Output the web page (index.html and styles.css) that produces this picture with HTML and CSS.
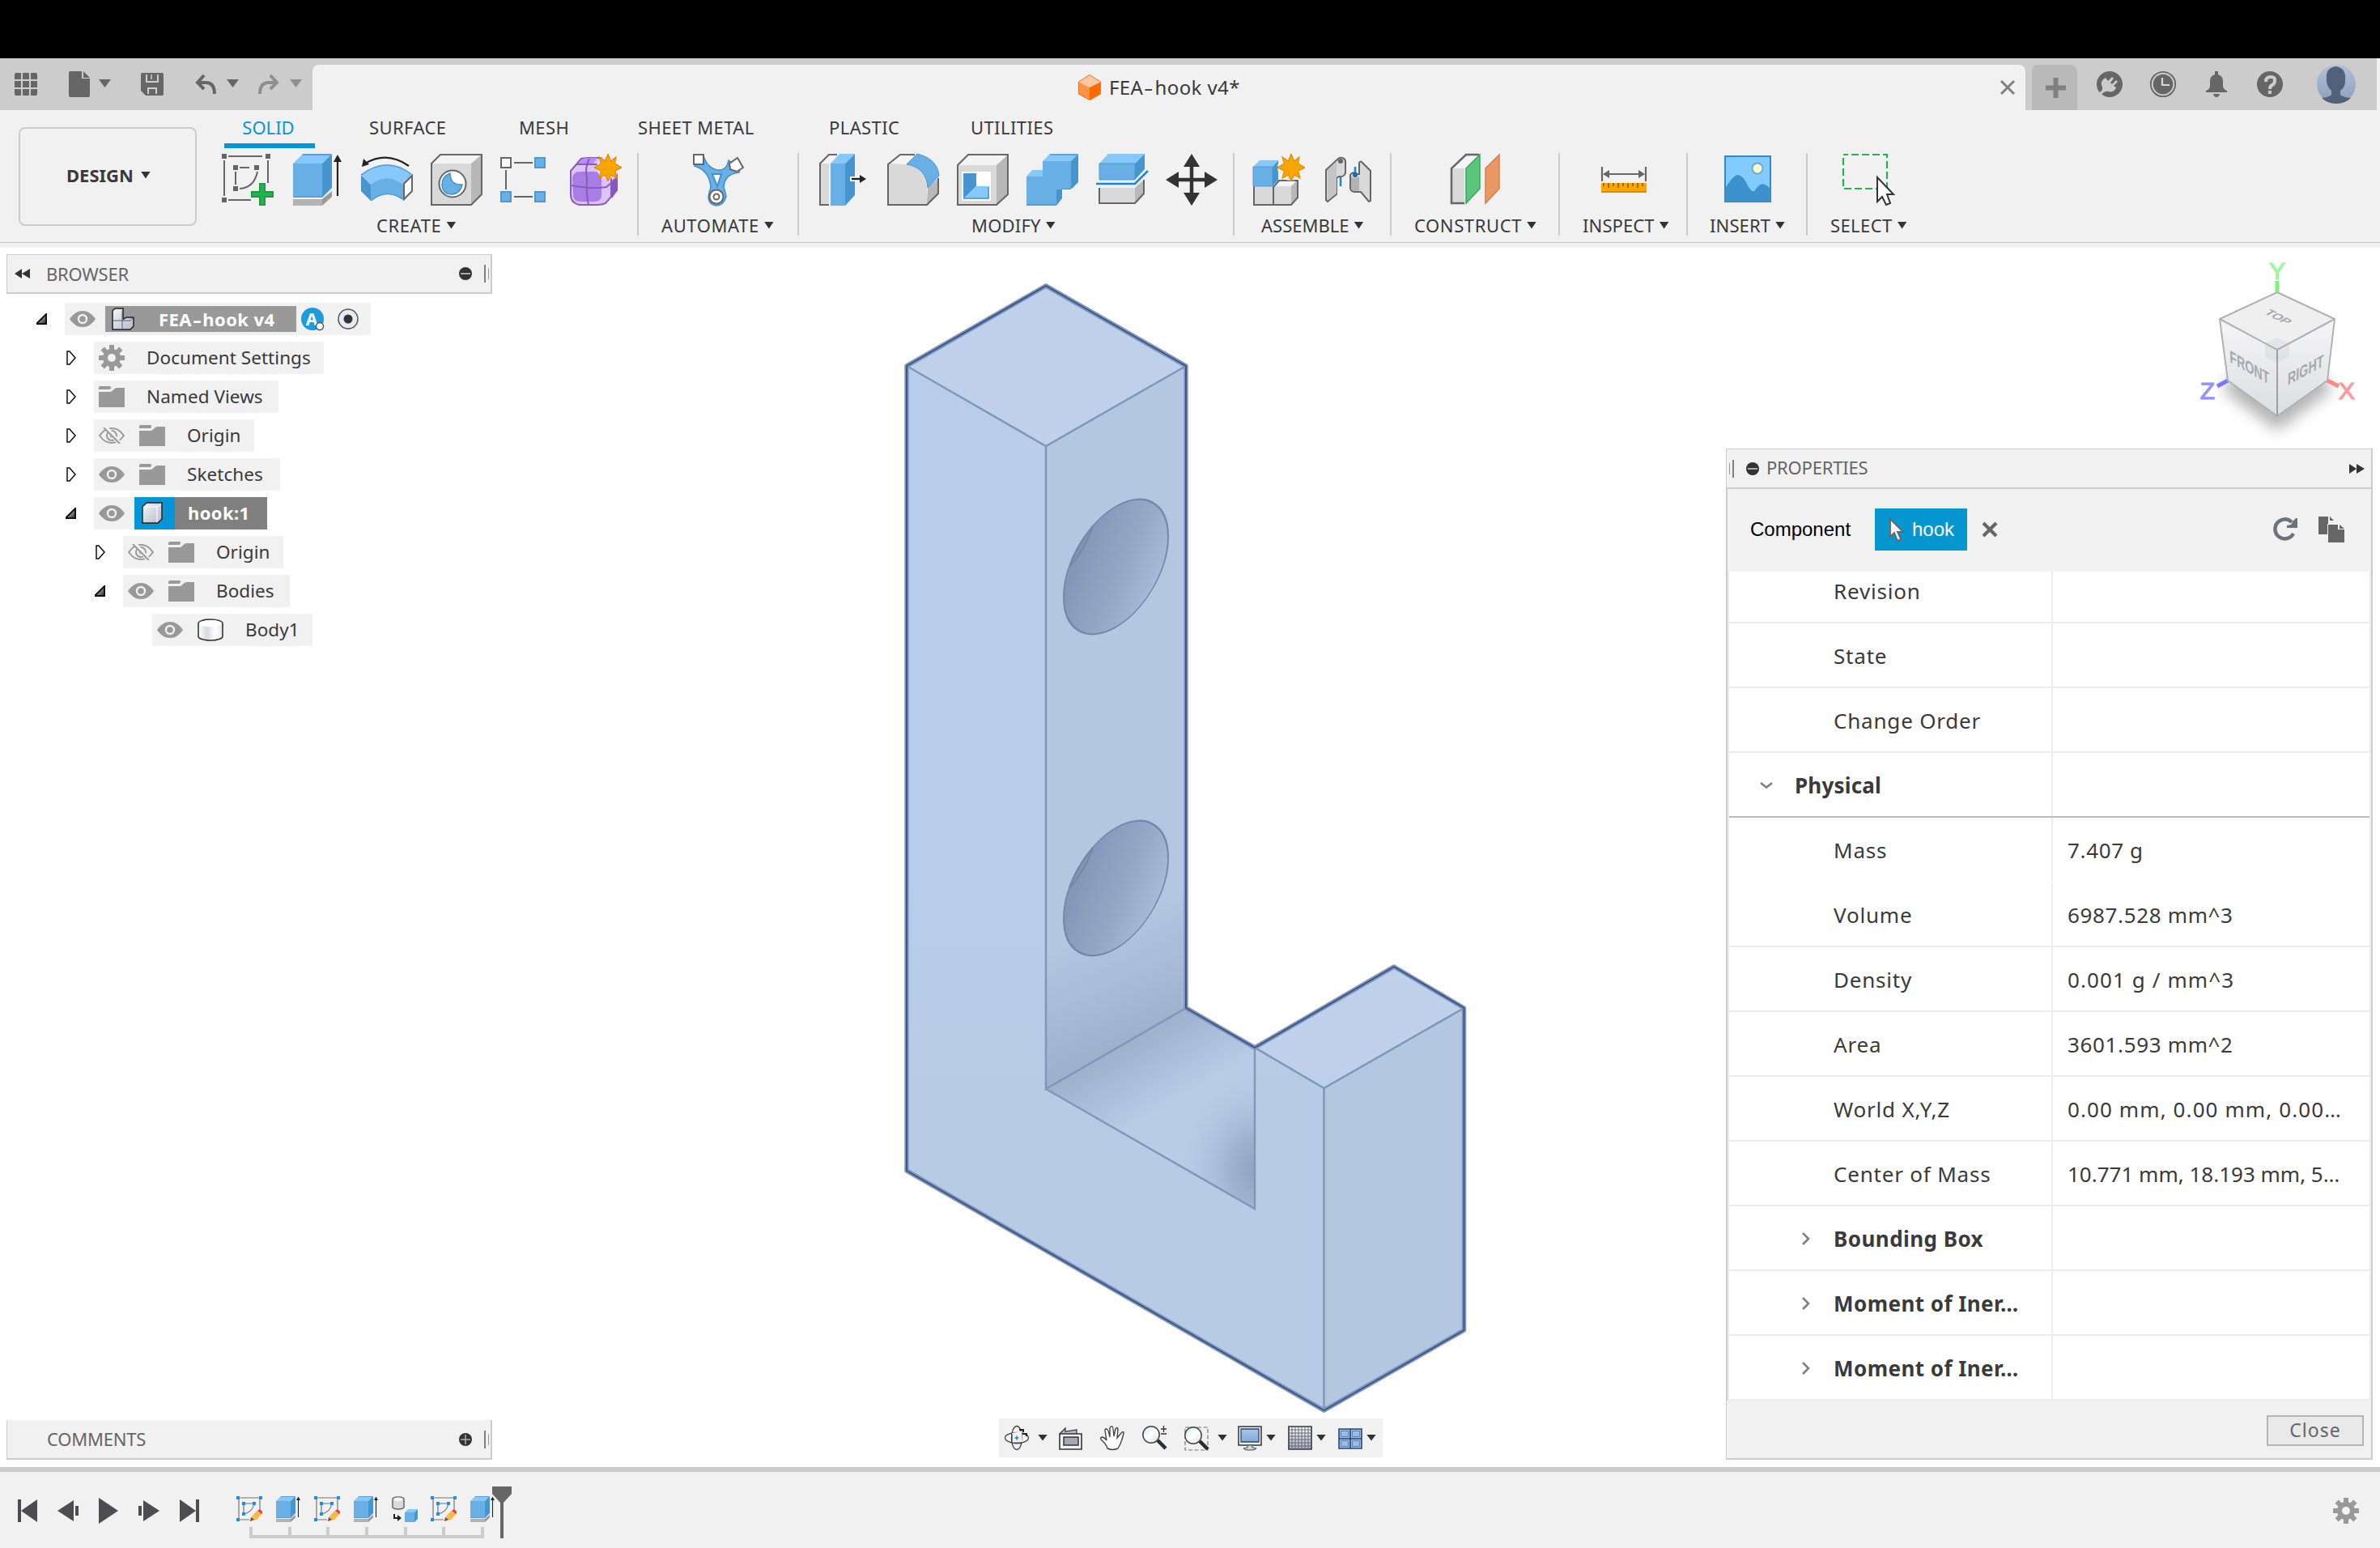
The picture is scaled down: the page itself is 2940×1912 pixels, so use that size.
FILE: index.html
```html
<!DOCTYPE html>
<html lang="en">
<head>
<meta charset="utf-8">
<title>FEA-hook v4*</title>
<link rel="stylesheet" href="styles.css">
</head>
<body>
<svg class="defs" width="0" height="0">
  <defs>
    <linearGradient id="metal" x1="0" y1="0" x2="1" y2="1"><stop offset="0" stop-color="#f4f6fa"/><stop offset="1" stop-color="#b4bac8"/></linearGradient>
    <linearGradient id="lens" x1="0" y1="0" x2="1" y2="1"><stop offset="0" stop-color="#cfe3e3"/><stop offset=".5" stop-color="#fff"/><stop offset="1" stop-color="#cfe0e0"/></linearGradient>
    <linearGradient id="screen" x1="0" y1="0" x2="0" y2="1"><stop offset="0" stop-color="#a9c6e8"/><stop offset="1" stop-color="#84a8d4"/></linearGradient>
    <linearGradient id="gridfill" x1="0" y1="0" x2="0" y2="1"><stop offset="0" stop-color="#fff"/><stop offset="1" stop-color="#a5abba"/></linearGradient>
    <linearGradient id="cyl" x1="0" y1="0" x2="1" y2="0"><stop offset="0" stop-color="#fff"/><stop offset=".35" stop-color="#d6d9e0"/><stop offset=".7" stop-color="#fff"/><stop offset="1" stop-color="#e4e6ea"/></linearGradient>
    <linearGradient id="avatarbg" x1="0" y1="0" x2="0" y2="1"><stop offset="0" stop-color="#b0c0d6"/><stop offset="1" stop-color="#8b9fbd"/></linearGradient>
    <linearGradient id="tri" x1="0" y1="0" x2="1" y2="1"><stop offset="0" stop-color="#fff"/><stop offset="1" stop-color="#222"/></linearGradient>
    <symbol id="eye" viewBox="0 0 32 20"><path d="M0 10C5 3 10 0 16 0s11 3 16 10c-5 7-10 10-16 10S5 17 0 10Z" fill="#999"/><circle cx="16" cy="10" r="5" fill="none" stroke="#f1f1f1" stroke-width="2.4"/></symbol>
    <symbol id="eye-off" viewBox="0 0 32 20"><path d="M1 10C6 3 10 1 16 1s10 2 15 9c-5 7-9 9-15 9S6 17 1 10Z" fill="none" stroke="#999" stroke-width="2"/><circle cx="16" cy="10" r="6" fill="none" stroke="#999" stroke-width="2"/><circle cx="16" cy="10" r="2.5" fill="#999"/><path d="M8-1 26 20" stroke="#f1f1f1" stroke-width="5"/><path d="M6 0 26 20" stroke="#999" stroke-width="2"/></symbol>
    <symbol id="folder" viewBox="0 0 32 26"><path d="M0 2Q0 0 2 0H14Q15 0 15 2T13 4H0ZM0 7H14Q16 7 18 4.500T22 2H32V26H0Z" fill="#999"/></symbol>
    <symbol id="closed" viewBox="0 0 12 18"><path d="M1 1H4L11 9 4 17H1Z" fill="#fff" stroke="#111" stroke-width="1.500"/></symbol>
    <symbol id="open" viewBox="0 0 14 14"><path d="M12 1V13H1V12Z" fill="url(#tri)" stroke="#111" stroke-width="2"/></symbol>
    <symbol id="gear" viewBox="0 0 32 32"><g fill="#999"><path fill-rule="evenodd" d="M16 5a11 11 0 1 0 0 22a11 11 0 1 0 0-22ZM16 11a5 5 0 1 1 0 10a5 5 0 1 1 0-10Z"/><g id="t"><rect x="13" y="0" width="6" height="7"/><rect x="13" y="25" width="6" height="7"/><rect x="0" y="13" width="7" height="6"/><rect x="25" y="13" width="7" height="6"/></g><use href="#t" transform="rotate(45 16 16)"/></g></symbol>
    <symbol id="extrude" viewBox="0 0 64 64"><path d="M2 56H38V64H2Z" fill="#b3b3b3"/><path d="M38 56 50 46V53L38 64Z" fill="#999"/><path d="M2 12 14 0H50L38 12Z" fill="#87c8fa"/><path d="M2 12H38V54H2Z" fill="#68afe5"/><path d="M38 12 50 0V42L38 54Z" fill="#4795cf"/><path d="M14 1H49M3 53H38" stroke="#5aa0d8" stroke-width="2"/><path d="M57 8V52" stroke="#222" stroke-width="2.200"/><path d="M52 10 57 1 62 10Z" fill="#222"/></symbol>
    <symbol id="tsketch" viewBox="0 0 32 32"><path d="M3 2H29M3 2V29M29 2V18M3 29H16M9 9H22M9 9V22Q20 20 22 9" fill="none" stroke="#777" stroke-width="1.200"/><g fill="#1b8fe8"><path d="M0 0h4v4H0zM28 0h4v4h-4zM0 27h4v4H0zM7 7h4v4H7zM20 7h4v4h-4zM7 20h4v4H7z"/></g><path d="M17 31 19 25 25 18 31 22 25 29Z" fill="#fbb942"/><path d="M17 31 18 26 22 29Z" fill="#555"/><path d="M26 18Q29 15 31 18T31 22Z" fill="#ee2e3a"/></symbol>
    <symbol id="star" viewBox="0 0 34 34"><path d="M17 0 20.500 9 27 4 25.500 12 34 17 25.500 21 28 30 20.500 26 17 34 13.500 26 6 30 8.500 21 0 17 8.500 12 6 4 13.500 9Z" fill="#f9a602" stroke="#e08c00" stroke-width="1.200"/></symbol>
  </defs>
</svg>

<div class="notch"></div>

<header class="titlebar">
  <div class="quick">
    <svg class="q-grid" width="28" height="28" viewBox="0 0 28 28" fill="#666"><path d="M2 0H8V8H0V2Q0 0 2 0ZM10 0h8v8h-8zM20 0H26Q28 0 28 2V8H20ZM0 10h8v8H0zM10 10h8v8h-8zM20 10h8v8h-8zM0 20H8V28H2Q0 28 0 26ZM10 20h8v8h-8zM20 20H28V26Q28 28 26 28H20Z"/></svg>
    <svg class="q-file" width="26" height="32" viewBox="0 0 26 32" fill="#666"><path d="M2 0H16V9H26V30Q26 32 24 32H2Q0 32 0 30V2Q0 0 2 0ZM18 0 26 8H18Z"/></svg>
    <i class="caret big"></i>
    <svg class="q-save" width="28" height="28" viewBox="0 0 28 28"><path d="M2 0H26Q28 0 28 2V26Q28 28 26 28H6L0 22V2Q0 0 2 0Z" fill="#666"/><path d="M7 2V11H21V2M9 26V19H19V26" fill="none" stroke="#ccc" stroke-width="2"/><path d="M13 2V8" stroke="#ccc" stroke-width="1.500"/></svg>
    <svg class="q-undo" width="26" height="25" viewBox="0 0 26 25" fill="none" stroke="#666" stroke-width="4"><path d="M11 1 3 10 11 18M4 10H13Q24 10 24 24"/></svg>
    <i class="caret big"></i>
    <svg class="q-redo" width="26" height="25" viewBox="0 0 26 25" fill="none" stroke="#8f8f8f" stroke-width="4"><path d="M15 1 23 10 15 18M22 10H13Q2 10 2 24"/></svg>
    <i class="caret big dim"></i>
  </div>
  <div class="doc-tab">
    <svg width="28" height="32" viewBox="0 0 28 32"><path d="M14 0 28 9 14 16 0 9Z" fill="#ffc9a3"/><path d="M0 9 14 16V32L0 24Z" fill="#ff9248"/><path d="M28 9 14 16V32L28 24Z" fill="#ff6a00"/><path d="M14 .5 27.500 9V24L14 31.500.5 24V9Z" fill="none" stroke="#e87628" stroke-width="1"/></svg>
    <span class="doc-name">FEA<b class="dash">-</b>hook v4*</span>
    <svg class="tab-x" width="18" height="18" viewBox="0 0 18 18"><path d="M1 1 17 17M17 1 1 17" stroke="#808080" stroke-width="3"/></svg>
  </div>
  <div class="new-tab"><svg width="25" height="25" viewBox="0 0 25 25"><path d="M0 12.500H25M12.500 0V25" stroke="#808080" stroke-width="6"/></svg></div>
  <div class="account">
    <svg width="32" height="32" viewBox="0 0 32 32"><circle cx="16" cy="16" r="16" fill="#666"/><path d="M3 26Q8 24 7 20Q3 12 11 8L14 12 19 7 21 9 17 14 19 16 24 11 26 13 21 18 24 20Q22 27 14 25Q10 24 6 29Z" fill="#ccc"/></svg>
    <svg width="32" height="32" viewBox="0 0 32 32"><circle cx="16" cy="16" r="15.200" fill="none" stroke="#666" stroke-width="1.800"/><circle cx="16" cy="16" r="12.300" fill="#666"/><path d="M15 8V17H24" fill="none" stroke="#d6d6d6" stroke-width="2.200"/></svg>
    <svg width="32" height="32" viewBox="0 0 32 32" fill="#666"><path d="M14 0H18V4Q24 6 24 12V18Q24 22 29 24V26H3V24Q8 22 8 18V12Q8 6 14 4ZM12 28H20Q19 32 16 32T12 28Z"/></svg>
    <svg width="32" height="32" viewBox="0 0 32 32"><circle cx="16" cy="16" r="16" fill="#666"/><path d="M11 13Q11 7 17 7T22 12Q22 15 19 17Q16 18 16 22" fill="none" stroke="#ccc" stroke-width="4"/><path d="M14 24h4v4h-4z" fill="#ccc"/></svg>
    <svg class="avatar" width="48" height="48" viewBox="0 0 48 48"><circle cx="24" cy="24" r="24" fill="url(#avatarbg)"/><path d="M24 2C15 3 12 8 12 14V21Q13 28 18 32V37Q15 40 6 41Q13 48 24 48T42 41Q32 40 29 37V32Q35 28 35 20V13Q34 4 24 2Z" fill="#52617a"/></svg>
  </div>
</header>

<section class="ribbon">
  <div class="design">DESIGN<i class="caret"></i></div>
  <div class="ribbon-main">
    <nav class="tabs"><span class="active">SOLID</span><span>SURFACE</span><span>MESH</span><span>SHEET METAL</span><span>PLASTIC</span><span>UTILITIES</span></nav>
    <div class="groups">
      <div class="group g-create">
        <div class="icons">
          <svg viewBox="0 0 64 64"><path d="M8 3H50M3 8V52M57 8V36M8 57H36M22 17H34M17 22V38M44 22Q40 42 22 43" fill="none" stroke="#666" stroke-width="2"/><path d="M0 0h6v6H0zM54 0h6v6h-6zM0 54h6v6H0zM14 14h6v6h-6zM40 14h6v6h-6zM14 40h6v6h-6z" fill="#666"/><path d="M47 37h6v10h10v6H53v10h-6V53H37v-6h10z" fill="#26b150" stroke="#1d9c43" stroke-width="2"/></svg>
          <svg><use href="#extrude"/></svg>
          <svg viewBox="0 0 64 64"><path d="M0 26 12 38V58L0 46Z" fill="#4795cf"/><path d="M0 26Q32 2 64 26L52 38Q32 22 12 38Z" fill="#87c8fa"/><path d="M12 38Q32 22 52 38V57Q32 42 12 58Z" fill="#68afe5"/><path d="M0 26Q32 2 62 25M12 58Q32 42 51 56" fill="none" stroke="#4f9bd3" stroke-width="1.500"/><path d="M53 37 63 27V46L53 56Z" fill="#fff" stroke="#666" stroke-width="2"/><path d="M5 12Q32-4 59 15" fill="none" stroke="#222" stroke-width="2.200"/><path d="M1 16 3 6 10 13Z" fill="#222"/></svg>
          <svg viewBox="0 0 64 64"><path d="M1 12H50V63H1Z" fill="#d9d9d9"/><path d="M1 12 12 1H63L50 12Z" fill="#f4f4f4"/><path d="M50 12 63 1V50L50 63Z" fill="#b8b8b8"/><path d="M1 12 12 1H63V50L50 63H1Z" fill="none" stroke="#666" stroke-width="2"/><circle cx="27" cy="37" r="16.500" fill="#fff" stroke="#666" stroke-width="2"/><path d="M24 24Q14 28 14 38Q15 50 26 50Q37 49 39 38Q24 39 24 24Z" fill="#68afe5" stroke="#4191cc" stroke-width="1.500"/></svg>
          <svg viewBox="0 0 64 64"><path d="M1 5h12v12H1z" fill="#fff" stroke="#666" stroke-width="2"/><path d="M43 5h12v12H43zM1 47h12v12H1zM43 47h12v12H43z" fill="#68afe5" stroke="#5198ce" stroke-width="2"/><path d="M17 11H40M7 20V44M17 53H40" stroke="#666" stroke-width="2"/></svg>
          <svg viewBox="0 0 64 64"><path d="M1 21 14 6Q18 5 22 5H38Q50 8 58 24V45L44 61Q40 63 34 63H12Q1 61 1 50Z" fill="#dcc3fa" stroke="#8a5cb8" stroke-width="2"/><path d="M10 12 18 5H34L28 13H12Z" fill="#b98bfa"/><path d="M3 30Q4 22 12 22H30Q39 22 39 30V52Q39 59 30 59H13Q4 59 4 50Z" fill="#a87ee6"/><path d="M52 33 59 28V44L52 55Z" fill="#8756bd"/><path d="M1 39Q28 44 45 41L58 30M24 6Q18 18 21 30Q20 50 23 63M8 13H34M51 18V54" fill="none" stroke="#8a5cb8" stroke-width="2"/><circle cx="47" cy="17" r="14" fill="#f1e6fb" opacity=".8"/><use href="#star" x="30" y="0" width="34" height="34"/></svg>
        </div>
        <div class="label">CREATE<i class="caret"></i></div>
      </div>
      <div class="group g-automate">
        <div class="icons">
          <svg viewBox="0 0 64 64"><path d="M13 2Q17 17 30 20Q42 21 44 8L58 20 57 23Q39 25 38 41Q40 46 41 53Q38 64 28 64Q19 62 19 53Q20 46 22 42Q21 21 2 15Z" fill="#68afe5" stroke="#4191cc" stroke-width="1.500"/><path d="M1 1h12v12H1z" fill="#fff" stroke="#666" stroke-width="2"/><path d="M55 5 62 17 54 22 46 19 45 12Z" fill="#fff" stroke="#666" stroke-width="2"/><path d="M24 25H35L30 40Z" fill="#fff" stroke="#4191cc" stroke-width="2"/><circle cx="29" cy="53" r="8.500" fill="#fff" stroke="#666" stroke-width="2"/><circle cx="29" cy="53" r="3.500" fill="#fff" stroke="#666" stroke-width="2"/></svg>
        </div>
        <div class="label">AUTOMATE<i class="caret"></i></div>
      </div>
      <div class="group g-modify">
        <div class="icons">
          <svg viewBox="0 0 64 64"><path d="M3 12H14V63H3Z" fill="#d9d9d9"/><path d="M3 12 14 1H24L14 12Z" fill="#f4f4f4"/><path d="M14 63H3V12L14 1H24" fill="none" stroke="#666" stroke-width="2"/><path d="M16 12 27 0H46L34 12Z" fill="#87c8fa"/><path d="M16 12H34V64H16Z" fill="#68afe5"/><path d="M34 12 46 0V51L34 64Z" fill="#4795cf"/><path d="M40 31H54" stroke="#fff" stroke-width="6"/><path d="M42 31H53" stroke="#222" stroke-width="2.500"/><path d="M52 26 60 31 52 36Z" fill="#222"/></svg>
          <svg viewBox="0 0 64 64"><path d="M1 12H22Q46 16 49 42V63H1Z" fill="#d9d9d9"/><path d="M1 12 16 1H36L24 13Z" fill="#f4f4f4"/><path d="M50 42 63 30V49L49 63Z" fill="#b8b8b8"/><path d="M24 13 37 0Q62 6 64 27L50 42Q48 17 24 13Z" fill="#68afe5" stroke="#4b99d2"/><path d="M34 1H16L1 13V63H49L63 49V30" fill="none" stroke="#666" stroke-width="2"/></svg>
          <svg viewBox="0 0 64 64"><path d="M1 14H49V63H1Z" fill="#d9d9d9"/><path d="M1 14 14 1H63L49 14Z" fill="#f4f4f4"/><path d="M49 14 63 1V50L49 63Z" fill="#b8b8b8"/><path d="M1 14 14 1H63V50L49 63H1Z" fill="none" stroke="#666" stroke-width="2"/><path d="M6 22H42V58H6Z" fill="#fff"/><path d="M8 24H24V40L8 56Z" fill="#4795cf"/><path d="M24 40H40V56H8Z" fill="#87c8fa"/><path d="M9 24V55H39V41" fill="none" stroke="#4b99d2" stroke-width="1.500"/></svg>
          <svg viewBox="0 0 64 64"><path d="M0 28 7 20H22V28Z" fill="#87c8fa"/><path d="M20 9 29 0H64L55 9Z" fill="#87c8fa"/><path d="M0 28H20V9H55V44H37V64H0Z" fill="#68afe5"/><path d="M55 9 64 0V35L56 43H44V55L37 64V44H55Z" fill="#4795cf"/><path d="M0 63H37M29 1H63" stroke="#4f9bd3" stroke-width="1.500"/></svg>
          <svg viewBox="0 0 64 64"><path d="M4 42H48V61H4Z" fill="#d9d9d9"/><path d="M48 42 59 32V49L48 61Z" fill="#b8b8b8"/><path d="M4 42V61H48L59 49V32" fill="none" stroke="#666" stroke-width="2"/><path d="M4 12 15 0H60L48 12Z" fill="#87c8fa"/><path d="M4 12H48V32H4Z" fill="#68afe5" stroke="#4f9bd3"/><path d="M48 12 60 0V19L48 32Z" fill="#4795cf"/><path d="M0 37H48L64 21" fill="none" stroke="#1787e0" stroke-width="2.500"/></svg>
          <svg viewBox="0 0 64 64"><path d="M32 8V56M8 32H56" stroke="#333" stroke-width="4.500"/><path d="M32 0 42 16H22ZM32 64 42 48H22ZM0 32 16 22V42ZM64 32 48 22V42Z" fill="#333"/></svg>
        </div>
        <div class="label">MODIFY<i class="caret"></i></div>
      </div>
      <div class="group g-assemble">
        <div class="icons">
          <svg viewBox="0 0 64 64"><path d="M1 40H25V63H1ZM25 40H47V63H25Z" fill="#d9d9d9"/><path d="M25 40 33 32H55L47 40Z" fill="#f4f4f4"/><path d="M47 40 55 32V54L47 63Z" fill="#b8b8b8"/><path d="M1 40V63H47L55 54V33L32 33 25 41V63" fill="none" stroke="#666" stroke-width="2"/><path d="M0 16 8 8H31L24 16Z" fill="#87c8fa"/><path d="M0 16H24V40H0Z" fill="#68afe5" stroke="#4f9bd3"/><path d="M24 16 31 8V32L24 40Z" fill="#4795cf"/><circle cx="46" cy="17" r="16" fill="#f1f1f1" opacity=".8"/><use href="#star" x="30" y="0" width="34" height="34"/></svg>
          <svg viewBox="0 0 64 64"><path d="M18 7Q20 4 24 5Q28 6 28 10V24Q26 29 20 28L17 30V50L6 59 4 57V20Z" fill="#d9d9d9" stroke="#666" stroke-width="2"/><path d="M6 20 17 9V49L6 57Z" fill="#c4c4c4"/><circle cx="22" cy="9" r="3" fill="#666"/><path d="M45 11Q47 8 49 11L59 21V58L57 59 47 47H39Q34 46 34 42V26Q37 21 43 25H45Z" fill="#d9d9d9" stroke="#666" stroke-width="2"/><path d="M35 28Q40 32 45 28V45Q40 48 35 44Z" fill="#b3b3b3"/><path d="M22 29V40M40 16V27" stroke="#1787e0" stroke-width="2.500"/><circle cx="40" cy="26" r="3" fill="#1769b0"/></svg>
        </div>
        <div class="label">ASSEMBLE<i class="caret"></i></div>
      </div>
      <div class="group g-construct">
        <div class="icons">
          <svg viewBox="0 0 64 64"><path d="M2 18H18V61H2Z" fill="#d9d9d9"/><path d="M2 18 20 1H36L20 18Z" fill="#f4f4f4"/><path d="M36 1H20L2 18V61H18" fill="none" stroke="#666" stroke-width="2.500"/><path d="M20 18 37 1V43L20 61Z" fill="#5bc57c" stroke="#3aa55d" stroke-width="1.500"/><path d="M44 18 61 1V43L44 61Z" fill="#e89963" stroke="#cf824e" stroke-width="1.500"/></svg>
        </div>
        <div class="label">CONSTRUCT<i class="caret"></i></div>
      </div>
      <div class="group g-inspect">
        <div class="icons">
          <svg viewBox="0 0 64 64"><path d="M5 16V34M59 16V34M10 25H54" stroke="#666" stroke-width="2.200"/><path d="M6 25 14 20V30ZM58 25 50 20V30Z" fill="#666"/><path d="M4 36h56v12H4z" fill="#fba500"/><path d="M4 47h56" stroke="#e08c00" stroke-width="2"/><path d="M7 36v4M13 36v6M19 36v4M25 36v6M31 36v4M37 36v6M43 36v4M49 36v6M55 36v4" stroke="#8a6a20" stroke-width="1.800"/></svg>
        </div>
        <div class="label">INSPECT<i class="caret"></i></div>
      </div>
      <div class="group g-insert">
        <div class="icons">
          <svg viewBox="0 0 64 64"><path d="M4 3h56v56H4z" fill="#82cbff" stroke="#3488c8" stroke-width="2"/><path d="M4 43Q14 26 20 26T33 41Q38 49 41 45Q50 30 60 44V59H4Z" fill="#3e92cc"/><circle cx="44" cy="18" r="6.500" fill="#fdfbc8" stroke="#66aada" stroke-width="2"/></svg>
        </div>
        <div class="label">INSERT<i class="caret"></i></div>
      </div>
      <div class="group g-select">
        <div class="icons">
          <svg viewBox="0 0 64 64"><path d="M1 1H55V43H1Z" fill="none" stroke="#26b150" stroke-width="2.200" stroke-dasharray="9 4" stroke-dashoffset="3"/><path d="M43 29V59L49 53 54 63 59 61 55 50H63Z" fill="#fff" stroke="#333" stroke-width="2"/></svg>
        </div>
        <div class="label">SELECT<i class="caret"></i></div>
      </div>
    </div>
  </div>
</section>

<main class="viewport">
  <svg class="scene" viewBox="0 306 2940 1506" width="2940" height="1506">
    <defs>
      <linearGradient id="front" x1="0" y1="0" x2="0" y2="1"><stop offset=".5" stop-color="#b7cde9"/><stop offset=".7" stop-color="#b7cbe4"/></linearGradient>
      <linearGradient id="wall" gradientUnits="userSpaceOnUse" x1="1345" y1="1150" x2="1405" y2="1285"><stop offset="0" stop-color="#b3c7e1"/><stop offset="1" stop-color="#9db0cd"/></linearGradient>
      <linearGradient id="floor" gradientUnits="userSpaceOnUse" x1="1378" y1="1295" x2="1425" y2="1375"><stop offset="0" stop-color="#9db1ce"/><stop offset="1" stop-color="#b8cce6"/></linearGradient>
      <radialGradient id="pocket" gradientUnits="userSpaceOnUse" cx="1552" cy="1445" r="130" gradientTransform="translate(1552 1445) scale(.78 1) translate(-1552 -1445)"><stop offset="0" stop-color="#8fa2c1"/><stop offset=".3" stop-color="#99acca" stop-opacity=".85"/><stop offset="1" stop-color="#b8cce6" stop-opacity="0"/></radialGradient>
      <linearGradient id="hole" x1="0" y1=".3" x2="1" y2=".9"><stop offset="0" stop-color="#8095b7"/><stop offset=".55" stop-color="#95a8c6"/><stop offset=".85" stop-color="#a5b9d6"/><stop offset="1" stop-color="#b0c4e0"/></linearGradient>
      <linearGradient id="cubeside" x1="0" y1="0" x2="0" y2="1"><stop offset="0" stop-color="#f5f5f6"/><stop offset="1" stop-color="#dcdddf"/></linearGradient>
      <filter id="soft" x="-50%" y="-50%" width="200%" height="200%"><feGaussianBlur stdDeviation="9"/></filter>
    </defs>
    <path d="M1120 452V1446L1635.500 1742V1344L1550 1294V1493L1292 1345V551Z" fill="url(#front)"/>
    <path d="M1292 353 1465 452 1292 551 1120 452Z" fill="#bfd1ea"/>
    <path d="M1292 551 1465 452V1245L1292 1345Z" fill="url(#wall)"/>
    <path d="M1292 1345 1465 1245 1550 1294V1493Z" fill="url(#floor)"/>
    <path d="M1292 1345 1465 1245 1550 1294V1493Z" fill="url(#pocket)"/>
    <path d="M1550 1294 1722 1194 1808.500 1245 1635.500 1344Z" fill="#bfd1ea"/>
    <path d="M1635.500 1344 1808.500 1245V1643L1635.500 1742Z" fill="#b3c7e1"/>
    <g fill="url(#hole)" stroke="#7388ab" stroke-width="2">
      <ellipse rx="64.500" ry="74.500" transform="matrix(1 -.577 0 1 1378.500 700)"/>
      <ellipse rx="64.500" ry="74.500" transform="matrix(1 -.577 0 1 1378.500 1097)"/>
      <path d="M1321 700Q1329 675 1350 650Q1340 680 1321 700ZM1321 1097Q1329 1072 1350 1047Q1340 1077 1321 1097Z" fill="#8094b4"/>
    </g>
    <path d="M1120 452 1292 551 1465 452M1292 551V1345L1465 1245M1292 1345 1550 1493V1294L1635.500 1344 1808.500 1245M1635.500 1344V1740" fill="none" stroke="#8197b8" stroke-width="2.500"/>
    <path d="M1120 452 1292 353 1465 452V1245L1550 1294 1722 1194 1808.500 1245V1643L1635.500 1742 1120 1446Z" fill="none" stroke="#7f96bf" stroke-width="5.500" stroke-linejoin="round"/>
    <path d="M1120 452 1292 353 1465 452V1245L1550 1294 1722 1194 1808.500 1245V1643L1635.500 1742 1120 1446Z" fill="none" stroke="#3f5583" stroke-width="2" stroke-linejoin="round"/>

    <path d="M2752 470 2813 440 2875 470 2880 482 2813 532 2746 482Z" fill="#777" opacity=".55" filter="url(#soft)"/>
    <path d="M2813 347V362" stroke="#7cf57c" stroke-width="5"/>
    <path d="M2752 470 2739 477" stroke="#7a7af5" stroke-width="5"/>
    <path d="M2875 470 2889 477" stroke="#f98a8a" stroke-width="5"/>
    <path d="M2742 394 2813 432V514L2752 470Z" fill="url(#cubeside)"/>
    <path d="M2884 394 2813 432V514L2875 470Z" fill="url(#cubeside)"/>
    <path d="M2813 361 2884 394 2813 432 2742 394Z" fill="#efeff0"/>
    <path d="M2813 417 2828 424V440L2813 449 2798 440V424Z" fill="#d9dce4" opacity=".6"/>
    <path d="M2813 361 2884 394 2813 432 2742 394ZM2813 432V514L2752 470 2742 394M2813 514 2875 470 2884 394" fill="none" stroke="#b0b1b3" stroke-width="2" stroke-linejoin="round"/>
    <path d="M2813 432V514" stroke="#a0a0a2" stroke-width="2"/>
    <g class="cube-text">
      <text class="axis" x="2813" y="345" fill="#9cf59c" stroke="#9cf59c">Y</text>
      <text class="axis" x="2727" y="493" fill="#9494f8" stroke="#9494f8">Z</text>
      <text class="axis" x="2899" y="493" fill="#fa9a9a" stroke="#fa9a9a">X</text>
      <text class="face" transform="matrix(.68 .39 .03 1 2779 461)">FRONT</text>
      <text class="face" transform="matrix(.68 -.37 -.03 1 2848 464)">RIGHT</text>
      <text class="face" transform="matrix(.66 .34 -.6 .35 2810 394)">TOP</text>
    </g>
  </svg>

  <aside class="browser">
    <div class="panel-head">
      <svg class="chev" width="19" height="12" viewBox="0 0 19 12"><path d="M9 0V12L0 6ZM19 0V12L9 6Z" fill="#333"/></svg>
      <span>BROWSER</span>
      <svg class="pill" width="16" height="16" viewBox="0 0 16 16"><circle cx="8" cy="8" r="8" fill="#333"/><path d="M2 8H14" stroke="#aaa" stroke-width="2"/></svg>
      <i class="grip"></i>
    </div>
    <ul class="tree">
      <li class="lv0"><svg class="tg o"><use href="#open"/></svg>
        <div class="node n0"><svg class="eye"><use href="#eye"/></svg>
          <div class="root"><svg width="28" height="28" viewBox="0 0 28 28"><path d="M1 4 4 1H14V13L15 14 18 12H27V23L23 27H1Z" fill="url(#metal)" stroke="#222" stroke-width="1.500"/><path d="M1 16H13M13 4V27M13 14V16H23L27 12" fill="none" stroke="#5a6070" stroke-width="1"/></svg><b>FEA<b class="dash">-</b>hook v4</b></div>
          <svg class="badge" width="28" height="28" viewBox="0 0 28 28"><circle cx="14" cy="14" r="14" fill="#1c9cd9"/><text x="13" y="22">A</text><circle cx="23" cy="23" r="4.500" fill="#fff" stroke="#555" stroke-width="1.500"/></svg>
          <svg class="radio" width="26" height="26" viewBox="0 0 26 26"><circle cx="13" cy="13" r="12" fill="#e8ebf4" stroke="#555" stroke-width="1.500"/><circle cx="13" cy="13" r="5.500" fill="#333"/></svg>
        </div></li>
      <li class="lv1"><svg class="tg c"><use href="#closed"/></svg><div class="node n1"><svg class="gear"><use href="#gear"/></svg><span>Document Settings</span></div></li>
      <li class="lv1"><svg class="tg c"><use href="#closed"/></svg><div class="node n2"><svg class="folder"><use href="#folder"/></svg><span>Named Views</span></div></li>
      <li class="lv1"><svg class="tg c"><use href="#closed"/></svg><div class="node n3"><svg class="eye"><use href="#eye-off"/></svg><svg class="folder"><use href="#folder"/></svg><span>Origin</span></div></li>
      <li class="lv1"><svg class="tg c"><use href="#closed"/></svg><div class="node n4"><svg class="eye"><use href="#eye"/></svg><svg class="folder"><use href="#folder"/></svg><span>Sketches</span></div></li>
      <li class="lv1"><svg class="tg o"><use href="#open"/></svg><div class="node n5"><svg class="eye"><use href="#eye"/></svg><div class="sel-icon"><svg width="26" height="28" viewBox="0 0 26 28"><path d="M1 6 6 1H25V21L20 26H1Z" fill="url(#metal)" stroke="#222" stroke-width="1.500"/><path d="M2 6H19V25M19 6 24 2" fill="none" stroke="#fff" stroke-width="1"/></svg></div><b class="sel-name">hook:1</b></div></li>
      <li class="lv2"><svg class="tg c"><use href="#closed"/></svg><div class="node n3"><svg class="eye"><use href="#eye-off"/></svg><svg class="folder"><use href="#folder"/></svg><span>Origin</span></div></li>
      <li class="lv2"><svg class="tg o"><use href="#open"/></svg><div class="node n7"><svg class="eye"><use href="#eye"/></svg><svg class="folder"><use href="#folder"/></svg><span>Bodies</span></div></li>
      <li class="lv3"><i class="tg c"></i><div class="node n3"><svg class="eye"><use href="#eye"/></svg><svg class="body" viewBox="0 0 32 28"><path d="M1 6A15 5 0 0 1 31 6V22A15 5 0 0 1 1 22Z" fill="url(#cyl)" stroke="#333" stroke-width="1.600"/><ellipse cx="16" cy="6" rx="14" ry="4" fill="#fff"/></svg><span>Body1</span></div></li>
    </ul>
  </aside>

  <aside class="comments panel-head">
    <span>COMMENTS</span>
    <svg class="pill" width="16" height="16" viewBox="0 0 16 16"><circle cx="8" cy="8" r="8" fill="#333"/><path d="M2 8H14M8 2V14" stroke="#aaa" stroke-width="1.600"/></svg>
    <i class="grip"></i>
  </aside>

  <div class="navbar">
    <svg class="n-orbit" viewBox="0 0 30 30"><ellipse cx="15" cy="15" rx="14.500" ry="6.500" fill="none" stroke="#444" stroke-width="1.300"/><ellipse cx="15" cy="15" rx="6.500" ry="14.500" fill="none" stroke="#444" stroke-width="1.300"/><path d="M9 9 21 7 22 20 9 20Z" fill="#f1f1f1"/><path d="M9 10V20M12 21.500H20" stroke="#444" stroke-width="1.300"/><path d="M18 5h5v3M22 10h5v3" fill="none" stroke="#222" stroke-width="2"/><path d="M12.500 15h5M15 12.500v5" stroke="#1787e0" stroke-width="1.500"/></svg>
    <i class="caret"></i>
    <svg class="n-look" viewBox="0 0 30 30"><path d="M1 10 8 3V7L22 5V10" fill="#b4b9c2" stroke="#333" stroke-width="1.200"/><path d="M1 10h27v19H1z" fill="#f6f6f8" stroke="#333" stroke-width="1.600"/><path d="M6 14h18v10H6z" fill="#a4a9b4" stroke="#333" stroke-width="1.500"/></svg>
    <svg class="n-pan" viewBox="0 0 30 30"><path d="M9 28Q8 23 1 17Q0 14 3 14Q6 15 8 18L6 6Q6 3 8 4Q10 4 12 14L12 3Q13 0 15 1Q16 1 17 13L19 4Q21 1 22 4L21 15 26 9Q29 6 29 9Q27 20 22 28Q15 31 9 28Z" fill="#fcfcfc" stroke="#444" stroke-width="1.400"/></svg>
    <svg class="n-zoom" viewBox="0 0 30 30"><path d="M19 18 29 28" stroke="#2a2e36" stroke-width="4.500"/><circle cx="11" cy="11" r="10.200" fill="url(#lens)" stroke="#444" stroke-width="1.500"/><path d="M23 4h7M26.500 0v8M23 10h7" stroke="#333" stroke-width="1.300"/></svg>
    <svg class="n-window" viewBox="0 0 30 30"><path d="M1 2H29V30H1Z" fill="none" stroke="#777" stroke-width="1.200" stroke-dasharray="5 2.500"/><path d="M19 19 29 29" stroke="#2a2a2a" stroke-width="4.500"/><circle cx="11" cy="12" r="10.200" fill="url(#lens)" stroke="#444" stroke-width="1.500"/></svg>
    <i class="caret"></i>
    <svg class="n-mon" viewBox="0 0 30 30"><path d="M1 1h28v23H1z" fill="#f4f4f6" stroke="#333" stroke-width="1.500"/><path d="M4 4h22v16H4z" fill="url(#screen)" stroke="#27457a" stroke-width="1.300"/><path d="M12 24H18V27L23 28Q22 30 18 30H12Q8 30 7 28L12 27Z" fill="#d4d7de" stroke="#444" stroke-width="1"/></svg>
    <i class="caret"></i>
    <svg class="n-gridi" viewBox="0 0 30 30"><path d="M1 1h28v28H1z" fill="url(#gridfill)" stroke="#333" stroke-width="1.600"/><path d="M5 1V29M9 1V29M13 1V29M17 1V29M21 1V29M25 1V29M1 5H29M1 9H29M1 13H29M1 17H29M1 21H29M1 25H29" stroke="#666b78" stroke-width="1"/></svg>
    <i class="caret"></i>
    <svg class="n-views" viewBox="0 0 30 30"><path d="M1 4h28v24H1z" fill="#9dbce4" stroke="#27457a" stroke-width="1.600"/><path d="M15 4V28M1 16H29" stroke="#27457a" stroke-width="1.600"/><path d="M3.500 6.500h9v7h-9zM17.500 6.500h9v7h-9zM3.500 18.500h9v7h-9zM17.500 18.500h9v7h-9z" fill="none" stroke="#6482ab" stroke-width="1"/></svg>
    <i class="caret"></i>
  </div>

  <aside class="properties">
    <div class="prop-head">
      <i class="grip"></i>
      <svg width="16" height="16" viewBox="0 0 16 16"><circle cx="8" cy="8" r="8" fill="#333"/><path d="M2 8H14" stroke="#aaa" stroke-width="2"/></svg>
      <span>PROPERTIES</span>
      <svg class="chev" width="19" height="12" viewBox="0 0 19 12"><path d="M0 0V12L9 6ZM9 0V12L19 6Z" fill="#333"/></svg>
    </div>
    <div class="prop-pick">
      <span class="comp">Component</span>
      <span class="chip"><svg width="18" height="30" viewBox="0 0 18 30"><path d="M1 2V24L6 19 10 29 14 27 10 18H17Z" fill="#f4f4f4" stroke="#666" stroke-width="1.800"/></svg>hook</span>
      <svg class="clear" width="18" height="18" viewBox="0 0 18 18"><path d="M1 1 17 17M17 1 1 17" stroke="#666" stroke-width="4.200"/></svg>
      <svg class="refresh" width="30" height="30" viewBox="0 0 30 30"><path d="M25 20A12 12 0 1 1 23 6" fill="none" stroke="#6b747c" stroke-width="4.500"/><path d="M30 1V13H17V10L22 9 25 4 28 1Z" fill="#6b747c"/></svg>
      <svg width="32" height="32" viewBox="0 0 32 32" fill="#666"><path d="M0 0H12V9H11V22H0ZM14 0 19 5H14ZM12 10H24V16H32V32H12ZM26 10 32 15H26Z"/></svg>
    </div>
    <div class="table">
      <div class="row first"><div>Revision</div><div></div></div>
      <div class="row"><div>State</div><div></div></div>
      <div class="row"><div>Change Order</div><div></div></div>
      <div class="row cat"><div><svg width="16" height="8" viewBox="0 0 16 8"><path d="M1 1 8 6.500 15 1" fill="none" stroke="#808080" stroke-width="2.600"/></svg>Physical</div><div></div></div>
      <div class="row plain"><div>Mass</div><div>7.407 g</div></div>
      <div class="row"><div>Volume</div><div>6987.528 mm^3</div></div>
      <div class="row wide"><div>Density</div><div>0.001 g / mm^3</div></div>
      <div class="row"><div>Area</div><div>3601.593 mm^2</div></div>
      <div class="row wide"><div>World X,Y,Z</div><div>0.00 mm, 0.00 mm, 0.00…</div></div>
      <div class="row tight"><div>Center of Mass</div><div>10.771 mm, 18.193 mm, 5…</div></div>
      <div class="row sub"><div><svg width="9" height="16" viewBox="0 0 9 16"><path d="M1 1 8 8 1 15" fill="none" stroke="#808080" stroke-width="2.600"/></svg>Bounding Box</div><div></div></div>
      <div class="row sub"><div><svg width="9" height="16" viewBox="0 0 9 16"><path d="M1 1 8 8 1 15" fill="none" stroke="#808080" stroke-width="2.600"/></svg>Moment of Iner…</div><div></div></div>
      <div class="row sub"><div><svg width="9" height="16" viewBox="0 0 9 16"><path d="M1 1 8 8 1 15" fill="none" stroke="#808080" stroke-width="2.600"/></svg>Moment of Iner…</div><div></div></div>
    </div>
    <div class="prop-foot"><button>Close</button></div>
  </aside>
</main>

<footer class="timeline">
  <div class="transport">
    <svg viewBox="0 0 26 32"><path d="M0 2H4V30H0ZM24 2V30L4 16Z"/></svg>
    <svg viewBox="0 0 26 32"><path d="M19 3V29L-1 16ZM21 10H25V22H21Z"/></svg>
    <svg viewBox="0 0 26 32"><path d="M0 0 24 16 0 32Z"/></svg>
    <svg viewBox="0 0 26 32"><path d="M5 3V29L25 16ZM-1 10H3V22H-1Z"/></svg>
    <svg viewBox="0 0 26 32"><path d="M20 2H24V30H20ZM0 2V30L20 16Z"/></svg>
  </div>
  <div class="history">
    <div class="features">
      <svg><use href="#tsketch"/></svg>
      <svg><use href="#extrude"/></svg>
      <svg><use href="#tsketch"/></svg>
      <svg><use href="#extrude"/></svg>
      <svg viewBox="0 0 32 32"><path d="M1 4Q1 1 8 1T15 4V13Q15 16 8 16T1 13Z" fill="#d9d9d9" stroke="#666" stroke-width="1.500"/><ellipse cx="8" cy="4" rx="6" ry="2.500" fill="#f6f6f6"/><path d="M3 22V27H9" fill="none" stroke="#222" stroke-width="2"/><path d="M7 23 12 27 7 31Z" fill="#222"/><path d="M16 20H28V32H16Z" fill="#68afe5"/><path d="M16 20 20 16H32L28 20Z" fill="#87c8fa"/><path d="M28 20 32 16V28L28 32Z" fill="#4795cf"/></svg>
      <svg><use href="#tsketch"/></svg>
      <svg><use href="#extrude"/></svg>
    </div>
    <div class="ruler"><i></i><i></i><i></i><i></i><i></i><i></i><i></i></div>
  </div>
  <svg class="marker" width="24" height="64" viewBox="0 0 24 64"><path d="M0 0H24V9L14 20V64H10V20L0 9Z" fill="#666"/></svg>
  <svg class="settings"><use href="#gear"/></svg>
</footer>
</body>
</html>
```
FILE: styles.css
```css
* { box-sizing: border-box; }
body {
  margin: 0;
  width: 2940px;
  height: 1912px;
  overflow: hidden;
  display: flex;
  flex-direction: column;
  background: #f1f1f1;
  color: #3a3a3a;
  font: 22px/28px "Noto Sans", "Open Sans", sans-serif;
  letter-spacing: .4px;
}
svg { display: block; flex: none; overflow: visible; }
.defs { position: absolute; }
i { font-style: normal; flex: none; }
.dash { display: inline-block; transform: scaleX(1.5); margin: 0 3px; font-weight: inherit; }
.caret { width: 12px; height: 9px; margin-left: 6px; background: #333; clip-path: polygon(0 0, 100% 0, 50% 100%); }
.caret.big { width: 15px; height: 10px; background: #666; }
.caret.dim { background: #8f8f8f; }

.notch { height: 72px; background: #000; flex: none; }

/* title bar */
.titlebar { display: flex; height: 64px; width: 2936px; background: #ccc; flex: none; }
.quick { width: 386px; padding: 0 0 0 18px; display: flex; align-items: flex-start; }
.quick svg { margin-top: 18px; }
.quick .q-file { margin: 16px 0 0 39px; }
.quick .caret { margin: 26px 0 0 11px; }
.quick .q-save { margin-left: 37px; }
.quick .q-undo { margin: 20px 0 0 39px; }
.quick .q-undo + .caret { margin-left: 13px; }
.quick .q-redo { margin: 20px 0 0 24px; }
.quick .q-redo + .caret { margin-left: 13px; }
.doc-tab { width: 2116px; margin-top: 8px; background: #f1f1f1; border-radius: 8px 8px 0 0; display: flex; align-items: center; padding: 0 13px 0 946px; }
.doc-name { margin-left: 10px; font-size: 24px; letter-spacing: .4px; }
.tab-x { margin-left: auto; }
.new-tab { width: 56px; margin: 8px 0 0 8px; background: #b9b9b9; border-radius: 8px 8px 0 0; display: flex; align-items: center; justify-content: center; padding-left: 2px; }
.account { display: flex; padding: 16px 0 0 24px; gap: 34px; }
.account .avatar { margin: -8px 0 0 8px; }

/* ribbon */
.ribbon { height: 164px; border-bottom: 1px solid #c8c8c8; margin-bottom: 6px; display: flex; flex: none; }
.design { width: 220px; height: 122px; margin: 21px 0 0 23px; border: 2px solid #ccc; border-radius: 8px; display: flex; align-items: center; padding: 0 0 4px 57px; font-weight: 700; font-size: 22px; letter-spacing: 0; }
.design .caret { margin-left: 9px; }
.ribbon-main { margin-left: 13px; }
.tabs { display: grid; grid-template-columns: 179px 185px 147px 236px 175px 200px; padding: 7px 0 0 21px; height: 47px; }
.tabs span { height: 40px; }
.tabs .active { width: 112px; padding-right: 3px; text-align: center; color: #0696d7; border-bottom: 6px solid #0696d7; letter-spacing: 0; }
.groups { display: flex; margin-top: 6px; height: 102px; }
.group { border-right: 2px solid #ccc; padding-top: 1px; flex: none; }
.g-create { width: 533px; } .g-create .icons { padding-left: 18px; } .g-create .label { padding-left: 209px; letter-spacing: .6px; }
.g-automate { width: 198px; } .g-automate .icons { padding-left: 67px; } .g-automate .label { padding-left: 28px; letter-spacing: .6px; }
.g-modify { width: 538px; } .g-modify .icons { padding-left: 23px; } .g-modify .label { padding-left: 213px; letter-spacing: .2px; }
.g-assemble { width: 194px; } .g-assemble .icons { padding-left: 23px; } .g-assemble .label { padding-left: 33px; letter-spacing: 0; }
.g-construct { width: 208px; } .g-construct .icons { padding-left: 72px; } .g-construct .label { padding-left: 28px; letter-spacing: .6px; }
.g-inspect { width: 158px; } .g-inspect .icons { padding-left: 47px; } .g-inspect .label { padding-left: 28px; letter-spacing: .1px; }
.g-insert { width: 148px; } .g-insert .icons { padding-left: 42px; } .g-insert .label { padding-left: 27px; letter-spacing: .1px; }
.g-select { width: 150px; border: 0; } .g-select .icons { padding-left: 43px; } .g-select .label { padding-left: 28px; }
.icons { display: flex; gap: 22px; height: 74px; }
.icons svg { width: 64px; height: 64px; }
.label { display: flex; align-items: center; white-space: nowrap; }

/* viewport and overlay panels */
.viewport { position: relative; height: 1506px; background: #fff; flex: none; }
.scene { position: absolute; inset: 0; }
.cube-text { font-family: "Liberation Sans", sans-serif; text-anchor: middle; letter-spacing: 0; }
.axis { font-size: 30px; stroke-width: 1.2px; }
.face { font-size: 21px; font-weight: 700; fill: #a5a8af; }
.browser { position: absolute; left: 8px; top: 8px; }
.panel-head { width: 600px; height: 49px; display: flex; align-items: center; background: #f1f1f1; border: 1px solid #ccc; border-width: 1px 2px 2px 1px; color: #666; padding: 0 2px 0 9px; }
.panel-head span { margin-left: 20px; letter-spacing: -.2px; padding-bottom: 1px; }
.pill { margin-left: auto; }
.grip { width: 6px; height: 22px; margin-left: 15px; border-left: 2px solid #808080; background: linear-gradient(#999, #999) 3px center / 1px 14px no-repeat; }
.tree { list-style: none; margin: 11px 0 0; padding: 0; display: flex; flex-direction: column; gap: 8px; }
.tree li { display: flex; align-items: center; height: 40px; }
.lv0 { padding-left: 37px; } .lv1 { padding-left: 73px; } .lv2 { padding-left: 109px; } .lv3 { padding-left: 145px; }
.tg { width: 14px; height: 14px; margin-right: 21px; }
.tg.c { width: 12px; height: 18px; margin: 0 22px 0 1px; }
.node { height: 40px; display: flex; align-items: center; background: #f1f1f1; padding-left: 6px; white-space: nowrap; }
.node span { margin-left: 27px; padding-bottom: 1px; font-size: 22.5px; letter-spacing: .05px; }
.eye { width: 32px; height: 20px; }
.gear { width: 32px; height: 32px; }
.folder { width: 32px; height: 26px; }
.body { width: 32px; height: 28px; }
.eye + .folder, .eye + .body { margin-left: 18px; }
.n0 { width: 378px; } .n1 { width: 284px; } .n2 { width: 228px; } .n3 { width: 198px; } .n4 { width: 230px; } .n5 { width: 214px; } .n7 { width: 206px; }
.root { width: 236px; height: 32px; margin-left: 12px; background: #999; color: #fff; display: flex; align-items: center; padding-left: 8px; letter-spacing: .4px; }
.root > b { margin-left: 30px; padding-bottom: 1px; }
.badge { margin-left: 6px; }
.badge text { font: 700 21px "Noto Sans", sans-serif; fill: #fff; text-anchor: middle; letter-spacing: 0; }
.radio { margin-left: 17px; }
.sel-icon { width: 50px; height: 40px; margin-left: 12px; background: #0696d7; display: flex; align-items: center; padding-left: 9px; }
.sel-name { flex: 1; height: 40px; line-height: 38px; padding-left: 16px; background: #808080; color: #fff; letter-spacing: .4px; }
.comments { position: absolute; left: 8px; top: 1448px; border-top: 0; }
.comments span { margin-left: 40px; }

.navbar { position: absolute; left: 1234px; top: 1446px; width: 474px; height: 48px; background: #f1f1f1; display: flex; align-items: center; padding: 0 0 1px 7px; }
.navbar svg { width: 30px; height: 30px; }
.navbar .caret { height: 8px; margin-left: 5px; }
.navbar .n-orbit + .caret, .navbar .n-window + .caret { margin-left: 11px; }
.navbar .n-look { margin-left: 14px; }
.navbar .n-pan { margin-left: 21px; }
.navbar .n-zoom, .navbar .n-window { margin-left: 22px; }
.navbar .n-mon { margin-left: 13px; }
.navbar .n-gridi, .navbar .n-views { margin-left: 15px; }

/* properties */
.properties { position: absolute; left: 2132px; top: 248px; width: 799px; display: flex; flex-direction: column; background: #f1f1f1; }
.prop-head { height: 50px; border: 1px solid #ccc; border-width: 1px 2px 2px 1px; display: flex; align-items: center; color: #666; padding: 0 8px 0 0; }
.prop-head .grip { margin: 0 15px 0 3px; border-left: 0; border-right: 2px solid #808080; background-position: 0 center; }
.prop-head span { margin-left: 9px; padding-bottom: 3px; letter-spacing: -.2px; font-size: 22px; }
.prop-head .chev { margin-left: auto; }
.prop-pick { height: 102px; border: 2px solid #ccc; border-width: 0 2px; display: flex; align-items: center; padding: 0 33px 2px 28px; font: 24px/28px "Liberation Sans", Arial, sans-serif; letter-spacing: 0; color: #000; }
.comp { width: 154px; }
.chip { width: 114px; height: 52px; background: #0696d0; color: #fff; display: flex; align-items: center; padding-left: 18px; gap: 10px; }
.clear { margin-left: 19px; }
.refresh { margin: 0 26px 0 auto; }
.table { height: 1024px; overflow: hidden; border: 2px solid #ccc; border-width: 0 2px; padding: 0 2px; background: #ececec; }
.row { display: grid; grid-template-columns: 398px 1fr; height: 80px; background: #fff; border-bottom: 2px solid #ececec; font-size: 26px; line-height: 34px; letter-spacing: .8px; }
.row.first { margin-top: -16px; }
.row > div { display: flex; align-items: center; padding: 1px 0 0 129px; white-space: nowrap; }
.row > div + div { padding-left: 18px; border-left: 2px solid #ececec; letter-spacing: .65px; }
.wide > div + div { letter-spacing: 1.1px; }
.tight > div + div { letter-spacing: 0; }
.cat { border-bottom-color: #bbb; }
.plain { border-bottom-color: #fff; }
.cat, .sub { font-weight: 700; letter-spacing: .45px; }
.row.cat { letter-spacing: .2px; }
.row.cat > div:first-child { padding-left: 38px; gap: 27px; }
.row.sub > div:first-child { padding-left: 90px; gap: 30px; }
.prop-foot { height: 73px; border: 1px solid #ccc; border-width: 0 2px 2px 1px; display: flex; align-items: flex-start; justify-content: flex-end; padding: 18px 9px 0 0; }
.prop-foot button { width: 120px; height: 38px; padding: 0 0 2px; border: 2px solid #b5b5b5; background: #e9e9e9; color: #666; font: 23px/30px "Noto Sans", sans-serif; letter-spacing: 1px; }

/* timeline */
.timeline { height: 100px; border-top: 6px solid #ccc; display: flex; align-items: flex-start; padding-left: 22px; flex: none; }
.transport { display: flex; gap: 23px; width: 270px; margin-top: 32px; fill: #4d4d4f; }
.transport svg { width: 26px; height: 32px; margin-right: 1px; }
.history { width: 316px; margin-top: 30px; }
.features { display: flex; gap: 16px; height: 38px; }
.features svg { width: 32px; height: 32px; }
.ruler { width: 290px; height: 14px; margin-left: 16px; border-bottom: 4px solid #ccc; display: flex; justify-content: space-between; }
.ruler i { width: 4px; height: 10px; background: #ccc; }
.marker { margin-top: 18px; }
.settings { width: 32px; height: 32px; margin: 32px 26px 0 auto; }
```
